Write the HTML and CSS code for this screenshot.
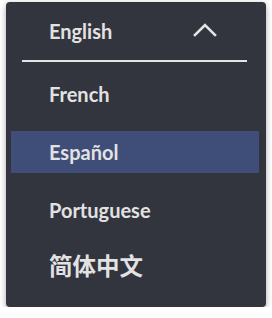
FILE: index.html
```html
<!DOCTYPE html>
<html lang="en">
<head>
<meta charset="utf-8">
<title>Language menu</title>
<link rel="stylesheet" href="styles.css">
</head>
<body>
<div class="menu">
  <div class="menu-header">
    <span class="menu-current">English</span>
    <svg class="chevron" width="24" height="14" viewBox="0 0 24 14" aria-hidden="true">
      <path d="M2 12 L12 2 L22 12" fill="none" stroke="#e4e4e4" stroke-width="2.6" stroke-linecap="square" stroke-linejoin="miter"/>
    </svg>
  </div>
  <div class="menu-divider"></div>
  <ul class="menu-list">
    <li class="menu-item">French</li>
    <li class="menu-item is-active">Español</li>
    <li class="menu-item">Portuguese</li>
    <li class="menu-item cjk" lang="zh-Hans">简体中文</li>
  </ul>
</div>
</body>
</html>
```
FILE: styles.css
```css
html, body {
  margin: 0;
  padding: 0;
  background: #ffffff;
}

body {
  padding: 2px 6px 0 6px;
  font-family: "Lato", "Noto Sans CJK SC", sans-serif;
}

.menu {
  width: 260px;
  height: 305px;
  box-sizing: border-box;
  background: #33353e;
  border-radius: 4px;
  box-shadow: 0 2px 6px rgba(0, 0, 0, 0.35);
  color: #e2e2e2;
  display: flex;
  flex-direction: column;
}

.menu-header {
  height: 58px;
  display: flex;
  align-items: center;
  justify-content: space-between;
  padding: 0 49px 0 43px;
}

.menu-current {
  font-size: 20px;
  font-weight: 700;
  line-height: 1;
}

.chevron {
  display: block;
  margin-top: -2px;
}

.menu-divider {
  height: 2px;
  background: #e4e4e4;
  margin: 0 19px 0 16px;
}

.menu-list {
  list-style: none;
  margin: 0;
  padding: 11px 7px 0 5px;
  display: flex;
  flex-direction: column;
  gap: 16px;
}

.menu-item {
  height: 42px;
  display: flex;
  align-items: center;
  padding-left: 38px;
  font-size: 20px;
  font-weight: 700;
  line-height: 1;
}

.menu-item.is-active {
  background: #3f4e79;
}

.menu-item.cjk {
  font-family: "Noto Sans CJK SC", sans-serif;
  font-size: 23.5px;
  font-weight: 700;
  margin-top: -2px;
}
```
